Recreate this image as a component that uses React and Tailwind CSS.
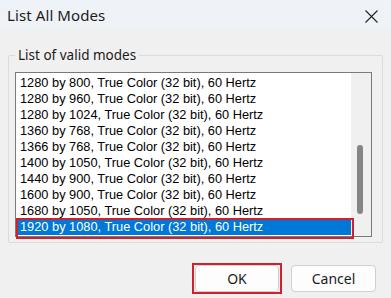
import React from 'react';

const modes = [
  '1280 by 800, True Color (32 bit), 60 Hertz',
  '1280 by 960, True Color (32 bit), 60 Hertz',
  '1280 by 1024, True Color (32 bit), 60 Hertz',
  '1360 by 768, True Color (32 bit), 60 Hertz',
  '1366 by 768, True Color (32 bit), 60 Hertz',
  '1400 by 1050, True Color (32 bit), 60 Hertz',
  '1440 by 900, True Color (32 bit), 60 Hertz',
  '1600 by 900, True Color (32 bit), 60 Hertz',
  '1680 by 1050, True Color (32 bit), 60 Hertz',
  '1920 by 1080, True Color (32 bit), 60 Hertz',
];

const ui = { fontFamily: '"Noto Sans", "Open Sans", sans-serif' };
const listFont = { fontFamily: '"Liberation Sans", Arial, sans-serif' };

export default function App() {
  const selected = 9;

  return (
    <div className="w-[391px] h-[298px] bg-[#f0f0f0] overflow-hidden text-[#1a1a1a]" style={ui}>
      {/* title bar */}
      <div className="h-[31px] bg-gradient-to-b from-[#eef3f9] to-[#eff2f5] flex items-center justify-between pl-[7px] pr-[13px]">
        <span className="text-[15px] leading-none tracking-[0.1px] text-[#1b1b1b]">List All Modes</span>
        <svg width="13" height="13" viewBox="0 0 13 13" className="mt-[1px]">
          <path d="M0.5 0.5 L12.5 12.5 M12.5 0.5 L0.5 12.5" stroke="#222" strokeWidth="1.1" fill="none" />
        </svg>
      </div>

      {/* group box */}
      <div className="relative mx-[8px] mt-[24px] h-[188px] border border-[#dcdcdc] rounded-[2px]">
        <span className="absolute left-[6px] -top-[10px] px-[3px] bg-[#f0f0f0] text-[13.5px] leading-[18px] text-[#1b1b1b]">
          List of valid modes
        </span>

        <div className="relative ml-[6px] mt-[16px] w-[357px] h-[165px] border border-[#7a7a7a] bg-white flex">
          <div className="flex-1 pt-[2px] pl-[2px]" style={listFont}>
            {modes.map((m, i) => (
              <div
                key={m}
                className={
                  'h-[16px] pl-[2px] text-[12.8px] leading-[16px] whitespace-nowrap ' +
                  (i === selected ? 'bg-[#0078d7] text-white' : 'text-black')
                }
              >
                {m}
              </div>
            ))}
          </div>
          {/* scrollbar */}
          <div className="w-[20px] h-full bg-[#f0f0f0] relative">
            <div className="absolute left-[6px] top-[72px] w-[6px] h-[69px] rounded-[3px] bg-[#858585]" />
          </div>

          {/* red highlight */}
          <div className="absolute left-0 top-[145px] w-[338px] h-[21px] border-2 border-[#d11f2c] pointer-events-none" />
        </div>
      </div>

      {/* buttons */}
      <div className="flex justify-end gap-[12px] pr-[15px] mt-[22px]">
        <div className="relative">
          <button className="w-[84px] h-[27px] rounded-[4px] border border-[#d0d0d0] bg-[#fdfdfd] text-[14px] text-[#1b1b1b]">
            OK
          </button>
          <div className="absolute -left-[3px] -top-[2px] w-[90px] h-[31px] border-2 border-[#d11f2c]" />
        </div>
        <button className="w-[85px] h-[27px] rounded-[4px] border border-[#d0d0d0] bg-[#fdfdfd] text-[14px] text-[#1b1b1b]">
          Cancel
        </button>
      </div>
    </div>
  );
}
